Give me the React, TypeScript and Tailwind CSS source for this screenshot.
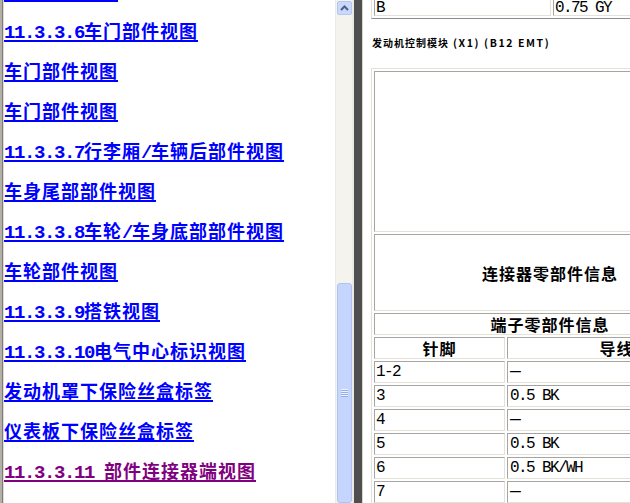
const links = [
  { text: "车顶部件视图" },
  { text: "11.3.3.6车门部件视图" },
  { text: "车门部件视图" },
  { text: "车门部件视图" },
  { text: "11.3.3.7行李厢/车辆后部件视图" },
  { text: "车身尾部部件视图" },
  { text: "11.3.3.8车轮/车身底部部件视图" },
  { text: "车轮部件视图" },
  { text: "11.3.3.9搭铁视图" },
  { text: "11.3.3.10电气中心标识视图" },
  { text: "发动机罩下保险丝盒标签" },
  { text: "仪表板下保险丝盒标签" },
  { text: "11.3.3.11 部件连接器端视图", visited: true },
];

const pins = [
  ["1-2", "—"],
  ["3", "0.5 BK"],
  ["4", "—"],
  ["5", "0.5 BK"],
  ["6", "0.5 BK/WH"],
  ["7", "—"],
];

// half-width latin runs use a mono face, the rest stays in the CJK face
function Label({ text }: { text: string }) {
  const parts = text.split(/([\x20-\x7e]+)/).filter(Boolean);
  return (
    <>
      {parts.map((p, i) =>
        /^[\x20-\x7e]+$/.test(p) ? (
          <span
            key={i}
            className="font-['Liberation_Mono',monospace] text-[19px] leading-[10px] tracking-[-1.4px] whitespace-pre"
          >
            {p}
          </span>
        ) : (
          <span key={i} className="tracking-[1px]">
            {p}
          </span>
        )
      )}
    </>
  );
}

const cell =
  "border border-t-[#a5a5a5] border-l-[#a5a5a5] border-r-[#e4e2d6] border-b-[#e4e2d6] p-0";
const table =
  "border-separate border-spacing-[2px] table-fixed border border-t-[#e4e2d6] border-l-[#e4e2d6] border-r-[#8c8c8c] border-b-[#8c8c8c]";
const mono = " font-['Liberation_Mono',monospace] text-[16px] tracking-[-1.6px]";
const head = " text-center text-[16px] font-bold tracking-[1px]";

function Wire({ v }: { v: string }) {
  if (v === "—") return <span className="text-[18px] leading-[10px]">—</span>;
  return <>{v}</>;
}

export default function App() {
  return (
    <div className="w-[630px] h-[503px] overflow-hidden flex bg-white font-['Noto_Sans_CJK_SC',sans-serif]">
      {/* left frame edge */}
      <div className="w-[2px] bg-[#b3b0a9]" />
      <div className="w-[1px] bg-[#7d7b76]" />
      <div className="w-[1px] bg-[#dedcd5]" />

      {/* contents list */}
      <div className="w-[331px] overflow-hidden">
        <div className="-mt-[38px]">
          {links.map((l, i) => (
            <div key={i} className="h-[40px] flex items-end">
              <a
                className={
                  "inline-block border-b-2 leading-[20px] text-[18px] font-bold whitespace-nowrap " +
                  (l.visited
                    ? "text-[#800080] border-[#800080]"
                    : "text-[#0000ff] border-[#0000ff]")
                }
              >
                <Label text={l.text} />
              </a>
            </div>
          ))}
        </div>
      </div>

      {/* scrollbar */}
      <div className="w-[17px] flex flex-col bg-[#f4f3ee] border-l border-[#ecebe4]">
        <div className="mt-[1px] ml-[1px] w-[15px] h-[16px] rounded-[2px] border border-[#b4c6f1] bg-[#c9d8fc] flex items-center justify-center">
          <svg width="9" height="6" viewBox="0 0 9 6">
            <path d="M1 5 L4.5 1.5 L8 5" fill="none" stroke="#4d6185" strokeWidth="2" />
          </svg>
        </div>
        <div className="mt-[268px] ml-[1px] w-[15px] h-[220px] shrink-0 rounded-[3px] border border-[#afc3f3] bg-[#c6d5fd] flex flex-col items-center justify-center">
          {[0, 1, 2, 3].map((g) => (
            <div key={g} className="w-[7px] h-[2px] bg-[#eef3ff] border-b border-[#93ade9]" />
          ))}
        </div>
      </div>

      {/* frame splitter */}
      <div className="w-[2px] bg-[#ebeae4]" />
      <div className="w-[8px] bg-[#4f4f4f]" />
      <div className="w-[1px] bg-[#d8d6cb]" />

      {/* connector page */}
      <div className="flex-1 min-w-0 overflow-hidden pl-[8px] text-black">
        <table className={table + " w-[361px] -mt-[9px]" + mono}>
          <colgroup>
            <col className="w-[177px]" />
            <col />
          </colgroup>
          <tbody>
            <tr>
              <td className={cell + " h-[22px] align-bottom leading-[14px] pl-[1px]"}>B</td>
              <td className={cell + " h-[22px] align-bottom leading-[14px] pl-[1px] whitespace-pre"}>0.75 GY</td>
            </tr>
          </tbody>
        </table>

        <div className="mt-[18px] h-[12px] leading-[12px] text-[10px] font-bold tracking-[1px] whitespace-nowrap pl-[1px]">
          发动机控制模块
          <span className="text-[10.5px] tracking-[1.6px] whitespace-pre"> (X1) (B12 EMT)</span>
        </div>

        <table className={table + " w-[358px] mt-[19px]"}>
          <colgroup>
            <col className="w-[131px]" />
            <col />
          </colgroup>
          <tbody>
            <tr>
              <td colSpan={2} className={cell + " h-[161px]"} />
            </tr>
            <tr>
              <td colSpan={2} className={cell + " h-[77px]" + head}>
                连接器零部件信息
              </td>
            </tr>
            <tr>
              <td colSpan={2} className={cell + " h-[22px] leading-[20px]" + head}>
                端子零部件信息
              </td>
            </tr>
            <tr>
              <td className={cell + " h-[22px] leading-[20px]" + head}>针脚</td>
              <td className={cell + " h-[22px] leading-[20px]" + head}>导线</td>
            </tr>
            {pins.map(([pin, wire]) => (
              <tr key={pin}>
                <td className={cell + " h-[22px] leading-[20px] pl-[1px]" + mono}>{pin}</td>
                <td className={cell + " h-[22px] leading-[20px] pl-[2px] whitespace-pre" + mono}>
                  <Wire v={wire} />
                </td>
              </tr>
            ))}
          </tbody>
        </table>
      </div>
    </div>
  );
}
